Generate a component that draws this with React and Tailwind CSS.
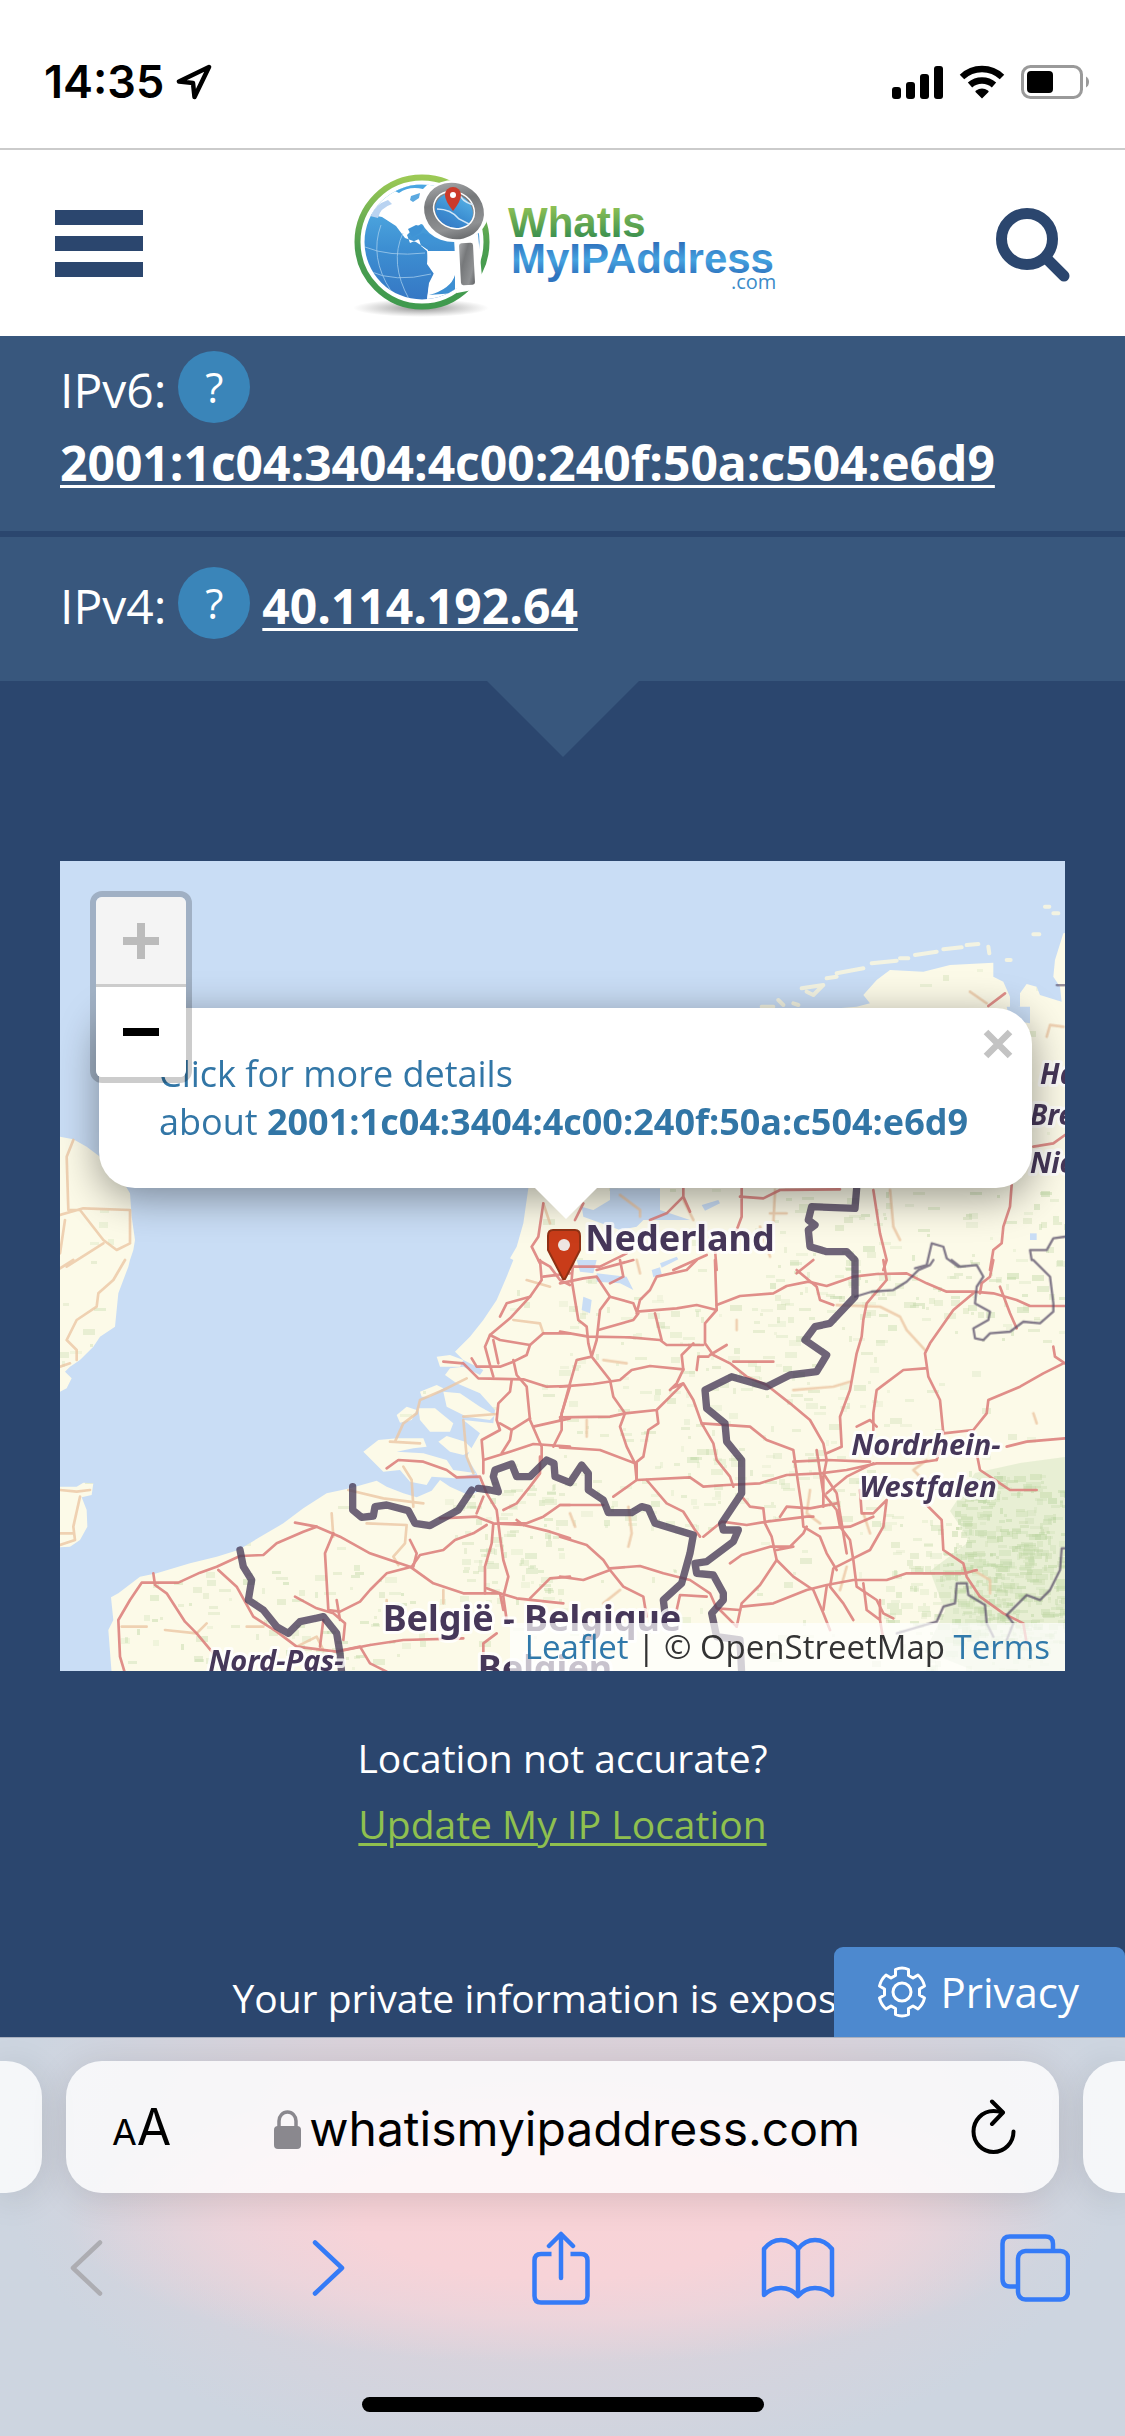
import React from "react";

const NAVY = "#2b466e";

/* ---------- status bar ---------- */

function StatusBar() {
  return (
    <div className="flex h-[150px] items-center justify-between border-b-2 border-[#cbcbcb] bg-white pt-4 pr-[34px] pl-11">
      <div className="flex items-center gap-3 font-['Inter',sans-serif] text-[45px] leading-[48px] font-semibold text-black">
        <span>14:35</span>
        <svg viewBox="0 0 36 36" className="size-9" fill="none" stroke="#000" strokeWidth="4.500" strokeLinejoin="round">
          <path d="M33 3 3 17.500l14 1.500 1.500 14z" />
        </svg>
      </div>
      <div className="flex items-center gap-[16px]">
        <svg viewBox="0 0 51 33" className="h-[33px] w-[51px]" fill="#000">
          <rect x="0" y="21" width="9" height="12" rx="3" />
          <rect x="14" y="16" width="9" height="17" rx="3" />
          <rect x="28" y="8" width="9" height="25" rx="3" />
          <rect x="42" y="0" width="9" height="33" rx="3" />
        </svg>
        <svg viewBox="0 0 46 34" className="h-[34px] w-[46px]" fill="none" stroke="#000" strokeWidth="6.500">
          <path d="M3 12a29 29 0 0 1 40 0" />
          <path d="M11 20a18 18 0 0 1 24 0" />
          <path d="M23 33.500 16.500 27q-.5-1 .5-1.500a11 11 0 0 1 12 0q1 .5.500 1.500z" fill="#000" stroke="none" />
        </svg>
        <svg viewBox="0 0 70 34" className="h-[34px] w-[70px]">
          <rect x="1.500" y="1.500" width="59" height="31" rx="8" fill="none" stroke="#9a9a9a" strokeWidth="3" />
          <rect x="6" y="6" width="26" height="22" rx="4" fill="#000" />
          <path d="M65 11.500a6.500 6.500 0 0 1 0 11z" fill="#9a9a9a" />
        </svg>
      </div>
    </div>
  );
}

/* ---------- logo ---------- */

function Logo() {
  return (
    <svg viewBox="-3 -5 450 170" className="h-[170px] w-[450px]" role="img" aria-label="WhatIsMyIPAddress.com">
      <defs>
        <linearGradient id="ring" x1="0" y1="0" x2="0" y2="1">
          <stop offset="0" stopColor="#9cc955" />
          <stop offset=".55" stopColor="#4b9d50" />
          <stop offset="1" stopColor="#3f9a4e" />
        </linearGradient>
        <linearGradient id="sea" x1="0" y1="0" x2="0" y2="1">
          <stop offset="0" stopColor="#59b6e8" />
          <stop offset=".55" stopColor="#3d8fd2" />
          <stop offset="1" stopColor="#3577c4" />
        </linearGradient>
        <linearGradient id="metal" x1="0" y1="0" x2="1" y2="1">
          <stop offset="0" stopColor="#a9abad" />
          <stop offset=".35" stopColor="#76787a" />
          <stop offset=".75" stopColor="#8f9193" />
          <stop offset="1" stopColor="#5f6163" />
        </linearGradient>
        <linearGradient id="word1" gradientUnits="userSpaceOnUse" x1="0" y1="42" x2="0" y2="74">
          <stop offset="0" stopColor="#92c355" />
          <stop offset="1" stopColor="#3d9150" />
        </linearGradient>
        <linearGradient id="word2" gradientUnits="userSpaceOnUse" x1="0" y1="78" x2="0" y2="112">
          <stop offset="0" stopColor="#2c6cb9" />
          <stop offset=".55" stopColor="#45a3e0" />
          <stop offset="1" stopColor="#2f74bf" />
        </linearGradient>
        <radialGradient id="shade">
          <stop offset="0" stopColor="#666" stopOpacity=".75" />
          <stop offset="1" stopColor="#888" stopOpacity="0" />
        </radialGradient>
        <clipPath id="globe">
          <circle cx="81" cy="79" r="57.500" />
        </clipPath>
      </defs>
      <ellipse cx="80" cy="145" rx="68" ry="9" fill="url(#shade)" />
      <circle cx="81" cy="79" r="64.500" fill="#fff" stroke="url(#ring)" strokeWidth="6" />
      <g clipPath="url(#globe)">
        <rect x="20" y="20" width="122" height="118" fill="url(#sea)" />
        <g fill="#fff">
          <path d="M18 18h90v30l-24 4 6 12-10-3-8 5-6 6 3 8 9-4 2 7 6 5 10 1 8 8 22-2 8 2v40l-20 4-10-6-18 2 2-14 5-12-7-10 1-14-12-8-11-4-9-12-14-9-10-2-4-8-6 0-6 12-10-4z" />
          <path d="M86 88h34v46l-20-8-14 10 2-16 7-14-8-8z" />
        </g>
        <path d="M29 53q6-12 18-16l4 4q-12 4-14 14z" fill="#b9d3f1" />
        <path d="M52 27q16-8 34-5l-4 4q-14-3-24 4z" fill="#4aa6e2" />
        <path d="M70 33l9-3-1 5-6 4-3-2z" fill="#5ba9e0" />
        <path d="M67 66l8-4 8 2-4 6-8 4zM74 74l8-4 12 4 8 6-10-1-6 3z" fill="#3f93d5" />
        <path d="M88 132q22-6 26-20v18z" fill="#3d8fd2" />
        <g fill="none" stroke="#a9d0ee" strokeWidth="1" opacity=".75">
          <path d="M24 84q24 10 60 6M28 108q26 12 62 3M40 62q-12 32 10 66M62 70q-14 30 6 66" />
        </g>
      </g>
      <ellipse cx="113" cy="48" rx="35" ry="31" fill="#fff" />
      <path d="M113 75l24-4 5 54-26 5z" fill="#fff" />
      <ellipse cx="113" cy="48" rx="25" ry="22" fill="url(#sea)" stroke="url(#metal)" strokeWidth="11" transform="rotate(28 113 48)" />
      <ellipse cx="113" cy="47" rx="21" ry="18" fill="none" stroke="#fff" strokeWidth="1.500" transform="rotate(28 113 47)" />
      <path d="M96 46q14 0 22 10l10 5M118 30q2 8 14 12" fill="none" stroke="#cfe5f7" strokeWidth="1.500" />
      <path d="M112 48q-8-10-8-16a8 8 0 0 1 16 0q0 6-8 16z" fill="#cc3a2a" />
      <circle cx="112" cy="32" r="3" fill="#fff" />
      <rect x="119" y="80" width="14" height="42" rx="2.500" fill="url(#metal)" transform="rotate(-3 126 101)" />
      <text x="167" y="74" fontFamily="Liberation Sans, sans-serif" fontWeight="700" fontSize="42" fill="url(#word1)">WhatIs</text>
      <text x="170" y="110" fontFamily="Liberation Sans, sans-serif" fontWeight="700" fontSize="42" fill="url(#word2)">MyIPAddress</text>
      <text x="390" y="126" fontFamily="Open Sans, sans-serif" fontSize="20" fill="#3b8bc9">.com</text>
    </svg>
  );
}

function Header() {
  return (
    <header className="grid h-[186px] grid-cols-[1fr_auto_1fr] items-center bg-white px-[55px]">
      <button aria-label="Menu" className="flex w-[88px] flex-col gap-[11px]">
        <span className="h-[15px] bg-[#2b466e]" />
        <span className="h-[15px] bg-[#2b466e]" />
        <span className="h-[15px] bg-[#2b466e]" />
      </button>
      <a href="#home">
        <Logo />
      </a>
      <button aria-label="Search" className="justify-self-end pt-1">
        <svg viewBox="0 0 74 74" className="size-[74px]" fill="none" stroke={NAVY}>
          <circle cx="31" cy="31" r="25.500" strokeWidth="11" />
          <path d="M51 51l17 17" strokeWidth="11" strokeLinecap="round" />
        </svg>
      </button>
    </header>
  );
}

/* ---------- addresses ---------- */

function Help({ label }) {
  return (
    <button
      aria-label={label}
      className="size-[72px] shrink-0 rounded-full bg-[#3a85b9] text-[42px] leading-[68px] text-white"
    >
      ?
    </button>
  );
}

const ADDRESS_LINK = "text-[48px] font-bold text-white underline decoration-[3px] underline-offset-[4px]";

function Addresses() {
  return (
    <section>
      <div className="border-b-[6px] border-[#2b466e] bg-[#38577d] px-[60px] pt-[15px] pb-8">
        <div className="flex items-start gap-3">
          <span className="mt-1.5 text-[48px] leading-[66px] text-white">IPv6:</span>
          <Help label="What is IPv6?" />
        </div>
        <a href="#ipv6" className={ADDRESS_LINK + " mt-1 block w-fit leading-[72px]"}>
          2001:1c04:3404:4c00:240f:50a:c504:e6d9
        </a>
      </div>
      <div className="flex items-start gap-3 bg-[#38577d] px-[60px] pt-[30px] pb-[42px]">
        <span className="mt-1.5 text-[48px] leading-[66px] text-white">IPv4:</span>
        <Help label="What is IPv4?" />
        <a href="#ipv4" className={ADDRESS_LINK + " mt-1.5 leading-[66px]"}>
          40.114.192.64
        </a>
      </div>
      <div className="mx-auto w-fit border-x-[76px] border-t-[76px] border-x-transparent border-t-[#38577d]" />
    </section>
  );
}

/* ---------- map drawing ---------- */

// Vegetation flecks, spread by a small seeded generator so that they stay put.
function makeFlecks() {
  let s = 7;
  const rnd = () => {
    s = (s * 16807) % 2147483647;
    return s / 2147483647;
  };
  const out = [];
  const add = (n, x, y, w, h, o) => {
    for (let i = 0; i < n; i++) {
      out.push({
        x: Math.round(x + rnd() * w),
        y: Math.round(y + rnd() * h),
        w: 3 + 3 * Math.floor(rnd() * 4),
        h: 3 + 3 * Math.floor(rnd() * 2),
        o: o * (0.4 + rnd() * 0.6),
      });
    }
  };
  add(420, 0, 0, 1005, 810, 0.35);
  add(140, 700, 330, 305, 150, 0.45);
  add(200, 500, 430, 330, 240, 0.35);
  add(80, 60, 710, 300, 90, 0.45);
  add(300, 890, 610, 115, 170, 0.5);
  add(220, 820, 660, 185, 150, 0.4);
  add(90, 400, 620, 100, 120, 0.4);
  return out;
}
const FLECKS = makeFlecks();

const LAND = [
  "M185 1240L175 1110 190 1080 183 1012 205 1000 270 950 320 940 420 910 500 890 565 870 640 825 700 790 760 745 830 700 900 685 980 662 1010 680 1060 700 1100 712 1145 692 1170 660 1200 680 1255 705 1300 690 1280 640 1250 590 1290 520 1240 480 1330 490 1335 450 1290 400 1220 370 1185 345 1200 325 1240 320 1290 345 1300 330 1240 300 1215 275 1260 230 1300 180 1340 120 1370 50 1390 0 1380 -5 1400 -40 1420 -110 1435 -215 1480 -600 2300 -750 2420 -760 2460 -770 2440 -795 2480 -840 2520 -870 2620 -865 2700 -885 2830 -892 2830 -850 2860 -835 2880 -790 2880 -755 2910 -760 2910 -800 2930 -828 2960 -820 2970 -795 3035 -775 3030 -820 3010 -850 3015 -900 3040 -980 3080 -990 3080 1240z",
  "M30 -370L70 -362 110 -340 150 -310 210 -250 240 -200 245 -130 255 -60 250 -30 240 0 235 20 205 100 195 200 150 230 130 260 90 300 60 320 45 335 65 355 50 385 30 395z",
  "M30 680L80 680 100 668 130 670 125 705 95 712 110 750 112 800 90 840 60 860 30 862z",
  "M940 575L985 540 1040 535 1120 535 1130 560 1090 565 1040 575 1120 580 1190 600 1210 630 1280 640 1215 655 1145 650 1130 675 1080 665 1050 630 1000 635z",
  "M1040 465L1070 440 1100 450 1085 480 1050 488z",
  "M1105 445L1155 445 1210 490 1200 515 1140 515 1110 480z",
  "M1110 395L1160 375 1180 385 1140 410 1115 410z",
  "M1165 545L1190 528 1245 545 1270 570 1240 585 1200 575z",
  "M1180 395L1230 400 1290 440 1335 465 1320 480 1250 470 1190 440z",
  "M1160 290L1200 285 1240 300 1230 320 1170 320z",
];

const WATER = [
  "M1680 -215h150v65l90 30h-140l-20 20-50 10-110-40-5-30 35 10 50-30z",
  "M1580 0h60l-10 40-40-5zM1600 110l25 10-5 40-25-10zM1640 40l90 10 20 40-40-20-70-5zM1805 30l25-8 5 20-25 10z",
  "M2870 -760h70v50l-60-10z",
  "M1955 -165l50-15 5 10-45 22z",
  "M1830 10l50-20 5 8-50 25z",
  "M2940 -80h20v20h-20z",
];

const ROADS_C = [
  "M225 1240L210 1190 205 1080 240 1020 275 968 385 968 450 938 500 920 570 888 640 885 680 850 760 815 800 800 735 788",
  "M310 940L315 975 350 1000 405 1085 440 1120 490 1180",
  "M505 930L560 980 610 1070 680 1115 740 1160 860 1175 960 1155 1060 1140 1240 1135",
  "M800 800L870 830 960 880 1080 920 1150 970 1240 1000 1350 1000 1400 1015 1540 1030",
  "M850 820L825 880 835 1050 870 1055 930 1025 960 990 1010 940 1085 920 1110 885 1180 870 1215 840 1270 820 1310 795",
  "M735 1010L800 1045 850 1060 885 1090 880 1140M820 1080L810 1160M860 1020L870 1080",
  "M880 1170L930 1160 960 1210 1010 1235M1300 1240L1300 1150 1340 1120",
  "M1010 625L1045 600 1120 605 1190 630 1220 652 1290 650 1310 700 1340 750 1350 830 1360 900 1375 950 1360 1010 1370 1080",
  "M1170 775L1280 770 1330 790 1420 795 1500 815 1560 835M1300 710L1280 760M1330 790L1325 850 1305 920 1305 1000",
  "M1080 840L1100 880 1090 920M1440 1015L1500 955 1560 950M1350 790L1430 790 1480 770 1530 735 1560 735",
  "M1360 750L1400 730 1440 680 1470 640 1470 590",
  "M1470 0L1475 60 1440 110 1380 175 1320 225 1305 260 1320 315 1330 350",
  "M1350 170L1370 130 1440 110M1320 225L1350 240 1440 255 1480 220 1560 220",
  "M1180 305L1240 310 1285 355 1420 358 1490 380 1560 378M1440 255L1430 285 1390 305 1350 320 1280 320 1265 295",
  "M1330 240L1345 310M1390 300L1400 345 1430 380 1440 480 1475 560 1475 600",
  "M1385 360L1380 395 1345 430 1340 480 1350 510 1295 540 1300 600 1300 640",
  "M1350 490L1385 510 1440 475M1385 510L1380 540 1355 580M1300 600L1380 575 1450 552 1560 560M1450 500L1560 475M1560 380L1535 460 1535 510 1510 560",
  "M1400 780L1420 795M1310 985L1350 1000 1360 1050M1465 0L1500 20 1530 60 1560 75M1480 50L1560 40",
];

const ROADS_D = [
  "M40 0L35 60 55 180 80 200 85 250 95 290 50 300 30 370 0 480M0 70L70 55 110 50 150 110 120 150 110 240 95 290 150 360 160 410 195 460 180 500 200 560 225 610 230 660",
  "M180 0L190 50 150 70M110 30L220 0M150 110L220 130 230 155 350 145 410 135 470 150 M410 0L380 30 290 50 270 90 240 120 230 160M235 160L220 180 115 210",
  "M465 0L470 150 435 190 435 250 460 285 510 310 560 350 620 375 690 430 750 480 790 550 800 600 790 650 790 740",
  "M470 135L540 108 640 100 680 78 745 65 800 78 880 50 950 42 1040 40 1100 70 1160 95 1240 95 1300 100 1370 120 1410 138 1515 138",
  "M710 30L770 80 780 120 820 135M760 0L710 40M970 0L980 60 920 130 910 180 905 230 890 280 870 390 840 470 845 560 800 580",
  "M0 215L85 230 210 232 300 240 320 255 430 255M285 160L305 240M370 330L365 285 400 250M450 285L500 255M520 305L640 305M410 330L415 290 445 290",
  "M0 380L100 372 180 360 215 330 270 318 370 328 350 370 330 390 M370 370L290 450 195 460 150 470 0 472M335 385L370 370 400 420 425 490 460 550 470 600 510 650 520 680",
  "M290 450L295 490 265 510 250 590 225 610 120 570 0 562M425 490L570 500 620 540 700 570 710 640 725 740 730 800 780 830 800 880 830 930",
  "M230 610L230 660 160 710M230 660L390 652 430 680 500 675 600 670 680 645 780 640 860 630 950 610 1060 610 1130 600",
  "M260 660L320 730 370 755 405 810 420 830M0 735L130 735M0 830L80 855 130 900 150 930 70 960 0 950M150 925L240 918 310 940 390 960 450 1000 470 1045 540 1050M150 930L190 980 250 1010 260 1070M350 1050L360 1005 440 1010",
  "M430 830L485 785 560 795 620 785 740 770 760 770M550 715L570 740 610 745 615 790 635 830 650 900 700 950 760 990 790 1060 810 1110",
  "M510 910L545 885 630 860 690 860 730 820 740 800M650 900L600 975 545 1030 530 1100M545 1040L640 1030 740 990 800 975 880 960 980 960 1040 940 1215 940 1250 930",
  "M660 770L680 740 750 745 830 730M770 570L790 700 830 750 840 800 870 840 880 900 890 980 950 1020 970 1060 1000 1075M790 640L830 700 840 760 860 880",
  "M700 605L800 600 930 605M800 700L860 650 940 610M900 690L905 760 940 760 980 720 970 800 930 870 860 905 820 925 810 980 850 1030 880 1080M780 805L870 800 940 770",
  "M1240 100L1180 150 1110 250 1095 280 1105 350 1140 420 1150 520 1240 510 1280 460 1285 420 1380 380 1450 340 1510 310M1095 325L1030 330 950 390 940 460 940 510M1480 260L1485 290 1515 310M1300 0L1290 50 1265 70 1260 100M1320 80L1350 160 1370 205",
  "M1340 560L1400 545 1515 535M1250 580L1260 630 1320 670 1350 690 1430 690M1100 735L1145 780 1150 870 1210 910 1220 950 1260 1010 1330 1060 1390 1090 1400 1150",
  "M890 500L930 480 950 500M960 1020L960 1080M800 980L790 1050M910 970L920 1050 960 1080 970 1140M530 1100L480 1050M700 860L650 870M1130 600L1140 570",
];

const ROADS_B = [
  "M370 1015L370 1040 320 1090 270 1110M545 1015L545 1100 530 1140M370 1040L390 1085 M540 1040L610 1045 660 1020 840 1018M940 1020L960 1150 980 1230 970 1260M1355 1005L1350 1070 1330 1130 1325 1180 1300 1200 1290 1260M1420 890L1480 880 1515 855M1335 430L1285 468M70 1060L45 1110M0 1250L120 1250 200 1210M340 1260L440 1215M465 1200L470 1260",
];

const MINOR_C = [
  "M30 25L70 0M225 0L190 60 145 100 140 140 80 180 50 240 80 270 80 300M30 320L60 310",
  "M30 690L80 695 120 690M90 710L70 800 75 840 30 855M30 820L70 820",
  "M215 1100L290 1100M345 1110L440 1120 470 1090M845 760L850 830M895 690L1000 715 1120 730M950 790L1070 795 1065 850 1030 890 1045 915",
  "M1035 545L1060 490 1100 460 1110 420 1180 390 1250 355M1020 545L1110 550M1060 620L1085 660 1090 740M1390 180L1470 190 1480 220M1240 470L1340 462M1240 480L1250 590 1270 640M1180 990V1030M740 1160L800 1130 820 1170M1010 1020V1035M590 1100H640M1430 60L1500 80",
];
const MINOR_A = [
  "M70 870L50 920 55 1080 90 1080 160 1170 200 1200 240 1180M30 1095L100 1075 240 1080M240 1080V1180M50 1250L160 1180M30 1210L45 1110M1480 1060L1500 1120",
];
const MINOR_D = [
  "M80 480V530M205 740L215 820 205 860M530 180V210M30 760L45 800M830 135L960 140 1020 170 1040 210 1095 270M700 390L820 380 870 365M750 690L740 760 780 790M1240 930L1290 960 1290 1000M130 300L200 310M1420 460L1430 490M230 0L240 40M1100 600L1060 630 1080 650M180 990L130 1030M860 920L840 990M910 760L930 820",
];
const MINOR_B = [
  "M180 1035L240 1080 240 1100M370 1050L400 1110M645 1020L640 1120M630 1090H680M1230 425L1280 460M990 1020L1000 1130 1020 1170M1460 560L1470 525 1510 530M600 1130L630 1220",
];

const BORDERS_C = [
  "M908 680V750L935 772 970 768 975 740 1010 735 1075 752 1095 790 1140 797 1225 750 1265 690",
  "M1285 685L1320 690 1345 695 1330 650 1335 630 1385 612 1400 650 1440 650 1490 600 1512 610 1515 650 1560 668 1595 615 1615 640 1615 690 1660 720 1675 758 1745 758 1775 740 1795 745 1815 790 1930 825 1920 880 1895 970 1840 1020 1845 1060",
  "M570 870L580 920 605 960 595 1020 640 1050 680 1100 715 1120 750 1085 820 1070 860 1120 870 1180 875 1240",
  "M2420 -215L2415 -155 2285 -160 2275 -120 2295 -105 2275 -90 2280 -40 2330 -25 2390 -25 2415 0V110L2340 190 2295 200 2265 240 2330 285 2300 335 2220 345 2150 380 2045 350 1965 390 1970 445 2025 490 2030 545 2075 600V700L2015 790 2020 810 2065 810 2050 845 1970 905 1935 910 1940 940 1990 945 2020 1000 2020 1020 1985 1060 2000 1130 2070 1140 2075 1240",
];

const STATES_D = [
  "M885 110L935 95 1000 90 1040 65 1075 30 1110 15 1120 0M1175 0L1200 20 1250 15 1270 50 1250 80 1245 130 1290 155 1285 180 1240 205 1245 235 1270 240 1290 220 1350 215 1390 185 1440 190 1480 155 1480 130 1470 50 1420 0",
  "M1515 865H1505L1500 930 1470 990 1440 1020 1400 1005 1340 1065 1360 1090 1340 1140M1130 1085L1150 1040 1185 1030 1190 970 1220 970 1225 1005 1275 1035 1280 1090 1300 1130M1010 1120L1130 1085",
  "M1065 25L1100 15 1115 -50 1150 -40 1160 -5 1195 20M1515 -70L1480 -65 1460 -30 1410 -30 1415 0M1490 -825H1515",
];

const ISLANDS_B = [
  "M605 470H640M655 450L670 465M725 415L790 405 760 435 740 425M800 385L830 380M830 370L910 355M935 340L1010 332M1020 325H1045M1065 315L1130 305M1150 298L1205 292M1220 285L1255 282M1285 290L1288 310M700 460L715 465M1480 190H1495M1420 253H1438M1340 330H1352M1455 170H1468",
];

const LABELS = [
  { x: 620, y: 390, size: 36, text: "Nederland", italic: false },
  { x: 472, y: 770, size: 36, text: "België - Belgique", italic: false },
  { x: 485, y: 820, size: 36, text: "Belgien", italic: false },
  { x: 866, y: 594, size: 29, text: "Nordrhein-", italic: true },
  { x: 868, y: 636, size: 29, text: "Westfalen", italic: true },
  { x: 216, y: 810, size: 29, text: "Nord-Pas-", italic: true },
];
const EDGE_LABELS = [
  { x: 980, y: 223, text: "Hamburg" },
  { x: 970, y: 264, text: "Bremen" },
  { x: 970, y: 312, text: "Niedersachsen" },
];

function Strokes({ paths, ...rest }) {
  return (
    <g fill="none" strokeLinejoin="round" strokeLinecap="round" {...rest}>
      {paths.map((d) => (
        <path key={d} d={d} />
      ))}
    </g>
  );
}

const A = "translate(-10 -11) scale(.33333)";
const B = "translate(500 -11) scale(.33333)";
const C = "translate(-10 399) scale(.33333)";
const D = "translate(500 399) scale(.33333)";

function MapDrawing() {
  return (
    <svg viewBox="0 0 1005 810" preserveAspectRatio="xMidYMid slice" className="block h-full w-full">
      <defs>
        <clipPath id="land">
          {LAND.map((d) => (
            <path key={d} d={d} transform={C} />
          ))}
        </clipPath>
      </defs>
      <rect width="1005" height="810" fill="#c9ddf5" />
      <g transform={C} fill="#fcfae8">
        {LAND.map((d) => (
          <path key={d} d={d} />
        ))}
      </g>
      <g clipPath="url(#land)" fill="#bdd6a3">
        <path d="M915 612l45-10 45-6v214h-90l-50-20 20-40-15-40 40-30-20-30z" fill="#dbe7c6" opacity=".6" />
        {FLECKS.map((f, i) => (
          <rect key={i} x={f.x} y={f.y} width={f.w} height={f.h} opacity={f.o} />
        ))}
      </g>
      <g transform={C} fill="#c9ddf5">
        {WATER.map((d) => (
          <path key={d} d={d} />
        ))}
      </g>
      <Strokes paths={ISLANDS_B} transform={B} stroke="#f3f3e2" strokeWidth="12" />
      <g opacity=".8">
        <Strokes paths={MINOR_A} transform={A} stroke="#ecc7a4" strokeWidth="8" />
        <Strokes paths={MINOR_B} transform={B} stroke="#ecc7a4" strokeWidth="8" />
        <Strokes paths={MINOR_C} transform={C} stroke="#ecc7a4" strokeWidth="8" />
        <Strokes paths={MINOR_D} transform={D} stroke="#ecc7a4" strokeWidth="8" />
      </g>
      <g opacity=".88">
        <Strokes paths={["M1480 1060L1465 1160 1445 1190 1470 1240"]} transform={A} stroke="#dc7f7b" strokeWidth="8" />
        <Strokes paths={ROADS_B} transform={B} stroke="#dc7f7b" strokeWidth="8" />
        <Strokes paths={ROADS_C} transform={C} stroke="#dc7f7b" strokeWidth="8" />
        <Strokes paths={ROADS_D} transform={D} stroke="#dc7f7b" strokeWidth="8" />
      </g>
      <Strokes paths={STATES_D} transform={D} stroke="#5a4f6a" strokeWidth="7" opacity=".75" />
      <Strokes paths={BORDERS_C} transform={C} stroke="#4b3f5b" strokeWidth="22" opacity=".8" />
      <g
        fontFamily="Noto Sans, sans-serif"
        fontWeight="700"
        fill="#463759"
        stroke="#fff"
        strokeOpacity=".8"
        strokeWidth="6"
        strokeLinejoin="round"
        paintOrder="stroke"
      >
        {LABELS.map((l) => (
          <text key={l.text} x={l.x} y={l.y} fontSize={l.size} textAnchor="middle" fontStyle={l.italic ? "italic" : "normal"}>
            {l.text}
          </text>
        ))}
        {EDGE_LABELS.map((l) => (
          <text key={l.text} x={l.x} y={l.y} fontSize="28" fontStyle="italic">
            {l.text}
          </text>
        ))}
      </g>
      <path d="M493 369h22q5 0 5 6v14l-15 29h-2l-15-29v-14q0-6 5-6z" fill="#c93c19" stroke="#8f3114" strokeWidth="2" />
      <circle cx="504" cy="384" r="6" fill="#eee6e2" />
    </svg>
  );
}

function MapCard() {
  return (
    <section aria-label="Location map" className="relative mx-[60px] mt-[104px] h-[810px] overflow-hidden">
      <MapDrawing />

      <div className="absolute top-[147px] right-[33px] left-[39px]">
        <div className="rounded-[36px] bg-white px-[60px] py-[42px] shadow-[0_9px_42px_rgba(0,0,0,0.4)]">
          <a href="#details" className="block text-[36px] leading-[48px] text-[#3276a6]">
            Click for more details
            <br />
            about <b>2001:1c04:3404:4c00:240f:50a:c504:e6d9</b>
          </a>
        </div>
        <div className="relative mx-auto w-fit border-x-[31px] border-t-[31px] border-x-transparent border-t-white" />
        <button aria-label="Close popup" className="absolute top-[21px] right-[19px]">
          <svg viewBox="0 0 30 30" className="size-[30px]" stroke="#c3c3c3" strokeWidth="6.500">
            <path d="M3 3l24 24M27 3 3 27" />
          </svg>
        </button>
      </div>

      <div className="absolute top-[30px] left-[30px] overflow-hidden rounded-xl border-[6px] border-black/20 bg-clip-padding">
        <button aria-label="Zoom in" disabled className="flex size-[90px] items-center justify-center border-b-[3px] border-[#ccc] bg-[#f4f4f4]">
          <svg viewBox="0 0 36 36" className="size-9" stroke="#bbb" strokeWidth="8">
            <path d="M0 18h36M18 0v36" />
          </svg>
        </button>
        <button aria-label="Zoom out" className="flex size-[90px] items-center justify-center bg-white">
          <svg viewBox="0 0 36 36" className="size-9" stroke="#000" strokeWidth="8">
            <path d="M0 18h36" />
          </svg>
        </button>
      </div>

      <p className="absolute right-0 bottom-0 bg-white/70 px-[15px] text-[33px] leading-[48px] text-[#333]">
        <a href="#leaflet" className="text-[#3079aa]">Leaflet</a> | © OpenStreetMap{" "}
        <a href="#terms" className="text-[#3079aa]">Terms</a>
      </p>
    </section>
  );
}

/* ---------- page ---------- */

function PrivacyButton() {
  return (
    <button className="absolute right-0 bottom-0 flex h-[90px] items-center gap-[14px] rounded-t-[9px] bg-[#4d89cf] pr-[46px] pl-11 text-[42px] leading-[60px] text-white">
      <svg viewBox="0 0 48 52" className="h-[52px] w-12" fill="none" stroke="#fff" strokeWidth="3" strokeLinejoin="round">
        <path d="M17.500 3.500Q24 .5 30.500 3.500V9.500L35 12 40 9Q45 13.500 46.500 20L41.500 23V29L46.500 32Q45 38.500 40 43L35 40 30.500 42.500V48.500Q24 51.500 17.500 48.500V42.500L13 40 8 43Q3 38.500 1.500 32L6.500 29V23L1.500 20Q3 13.500 8 9L13 12 17.500 9.500Z" />
        <circle cx="24" cy="26" r="9" />
      </svg>
      Privacy
    </button>
  );
}

const TOOL = "flex size-24 items-center justify-center";

function BrowserBar() {
  return (
    <div className="flex flex-col items-center overflow-hidden border-t border-[#a9b0bf] bg-[#cdd5e0] bg-[radial-gradient(ellipse_44%_36%_at_50%_46%,#f8d3d7_0%,#f7d3d8_40%,rgba(244,213,219,0.7)_68%,rgba(225,212,221,0)_100%),radial-gradient(ellipse_50%_80%_at_50%_30%,rgba(224,209,216,0.95)_0%,rgba(221,210,218,0.8)_55%,rgba(205,213,224,0)_100%)] pb-6 font-['Inter',sans-serif] text-black">
      <div className="mt-[23px] flex h-[132px] w-full gap-6">
        <div className="w-[42px] rounded-r-[36px] bg-white/80 shadow-[0_6px_36px_rgba(0,0,0,0.12)]" />
        <div className="flex flex-1 items-center justify-between rounded-[36px] bg-white/80 pt-1 pr-[43px] pl-[46px] shadow-[0_6px_36px_rgba(0,0,0,0.12)]">
          <button aria-label="Page settings" className="flex items-baseline leading-[60px]">
            <span className="text-[36px]">A</span>
            <span className="text-[50px]">A</span>
          </button>
          <button className="flex items-center gap-2 pr-2 text-[48px] leading-[60px]">
            <svg viewBox="0 0 27 39" className="h-[39px] w-[27px]">
              <rect y="16" width="27" height="23" rx="4" fill="#8a888e" />
              <path d="M5 18v-7a8.500 9 0 0 1 17 0v7" fill="none" stroke="#8a888e" strokeWidth="3.500" />
            </svg>
            whatismyipaddress.com
          </button>
          <button aria-label="Reload" className="pb-1">
            <svg viewBox="0 0 45 56" className="h-14 w-[45px]" fill="none" stroke="#000" strokeWidth="4" strokeLinecap="round" strokeLinejoin="round">
              <path d="M42.500 32.500a20 20.500 0 1 1-20-20.500q4 0 9 1.500" />
              <path d="M21 2.500 32 13.500 21 25" />
            </svg>
          </button>
        </div>
        <div className="w-[42px] rounded-l-[36px] bg-white/80 shadow-[0_6px_36px_rgba(0,0,0,0.12)]" />
      </div>
      <nav className="mt-[27px] flex w-full justify-between pr-[42px] pl-[38px] text-[#357bf7]">
        <button aria-label="Back" className={TOOL} disabled>
          <svg viewBox="0 0 34 56" className="h-14 w-[34px]" fill="none" stroke="#adadb2" strokeWidth="4.500" strokeLinecap="round" strokeLinejoin="round">
            <path d="M31 2.500 4 28l27 25.500" />
          </svg>
        </button>
        <button aria-label="Forward" className={TOOL + " pl-3"}>
          <svg viewBox="0 0 34 56" className="h-14 w-[34px]" fill="none" stroke="currentColor" strokeWidth="4.500" strokeLinecap="round" strokeLinejoin="round">
            <path d="M3 2.500 30 28 3 53.500" />
          </svg>
        </button>
        <button aria-label="Share" className={TOOL}>
          <svg viewBox="0 0 58 74" className="h-[74px] w-[58px]" fill="none" stroke="currentColor" strokeWidth="4.500" strokeLinecap="round" strokeLinejoin="round">
            <path d="M19.500 23H9q-6.500 0-6.500 6.500V65q0 6.500 6.500 6.500h40q6.500 0 6.500-6.500V29.500Q55.500 23 49 23H38.500" strokeLinecap="butt" />
            <path d="M29 47V3M17 15 29 3l12 12" />
          </svg>
        </button>
        <button aria-label="Bookmarks" className={TOOL}>
          <svg viewBox="0 0 74 62" className="h-[62px] w-[74px]" fill="none" stroke="currentColor" strokeWidth="4.500" strokeLinejoin="round">
            <path d="M37 12Q30 3 20 3T3 12V58Q10 51 20 51T37 59Q44 51 54 51T71 58V12Q64 3 54 3T37 12V59" />
          </svg>
        </button>
        <button aria-label="Tabs" className={TOOL}>
          <svg viewBox="0 0 70 68" className="h-[68px] w-[70px]" fill="none" stroke="currentColor" strokeWidth="4.500">
            <path d="M18 52.500H10q-7.500 0-7.500-7.500V10q0-7.500 7.500-7.500H45.500q7.500 0 7.500 7.500v7" />
            <rect x="18" y="17" width="50" height="48.500" rx="7.500" />
          </svg>
        </button>
      </nav>
      <div className="mt-[81px] h-[15px] w-[402px] rounded-full bg-black" />
    </div>
  );
}

export default function App() {
  return (
    <div className="flex min-h-screen flex-col bg-[#2b466e] font-['Open_Sans',sans-serif]">
      <StatusBar />
      <Header />
      <main className="relative flex-1">
        <Addresses />
        <MapCard />
        <div className="mt-[54px] pb-[6px] text-center text-[39px] leading-[66px] text-white">
          <p>Location not accurate?</p>
          <a href="#update" className="text-[#8fc04f] underline decoration-[3px] underline-offset-[4px]">
            Update My IP Location
          </a>
          <p className="mt-[108px]">Your private information is exposed!</p>
        </div>
        <PrivacyButton />
      </main>
      <BrowserBar />
    </div>
  );
}
